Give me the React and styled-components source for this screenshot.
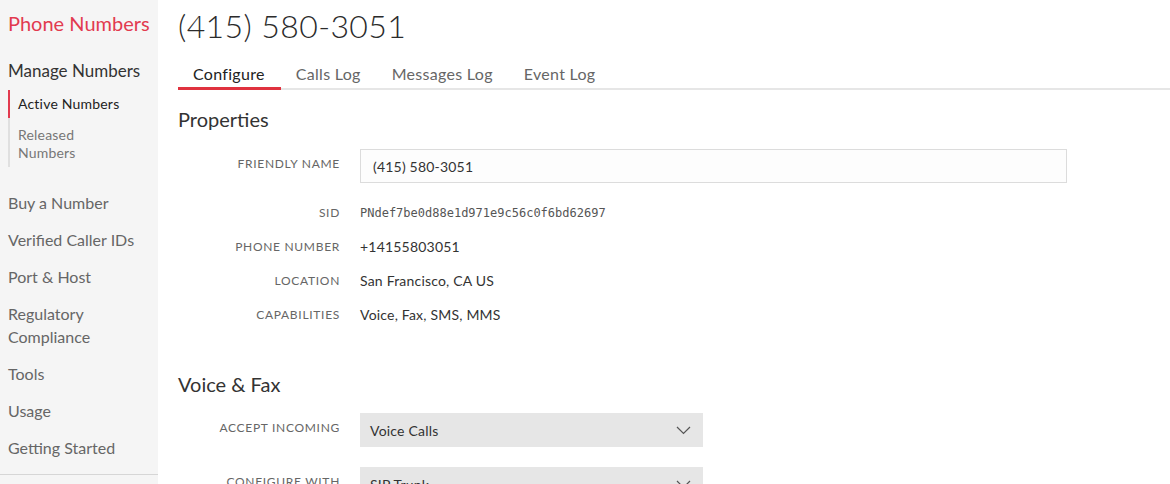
import React from "react";
import styled, { createGlobalStyle } from "styled-components";

const GlobalStyle = createGlobalStyle`
  html, body {
    margin: 0;
    padding: 0;
    background: #fff;
    font-family: Lato, "Open Sans", sans-serif;
    overflow: hidden;
  }
`;

const navItems = [
  "Buy a Number",
  "Verified Caller IDs",
  "Port & Host",
  "Regulatory Compliance",
  "Tools",
  "Usage",
  "Getting Started",
];

const tabs = ["Configure", "Calls Log", "Messages Log", "Event Log"];

const properties = [
  { label: "SID", value: "PNdef7be0d88e1d971e9c56c0f6bd62697", mono: true },
  { label: "Phone Number", value: "+14155803051" },
  { label: "Location", value: "San Francisco, CA US" },
  { label: "Capabilities", value: "Voice, Fax, SMS, MMS" },
];

function Chevron() {
  return (
    <svg width="15" height="9" viewBox="0 0 15 9">
      <path d="M1 1 L7.5 7.5 L14 1" fill="none" stroke="#555" strokeWidth="1.2" />
    </svg>
  );
}

function App() {
  return (
    <>
      <GlobalStyle />
      <StPage>
        <StSidebar>
          <StProduct>Phone Numbers</StProduct>
          <StSection>Manage Numbers</StSection>
          <StSubList>
            <StSubItem active>Active Numbers</StSubItem>
            <StSubItem>Released Numbers</StSubItem>
          </StSubList>
          <StNavList>
            {navItems.map((item) => (
              <StNavItem key={item}>{item}</StNavItem>
            ))}
          </StNavList>
          <StSideRule />
        </StSidebar>

        <StMain>
          <StTitle>(415) 580-3051</StTitle>
          <StTabs>
            {tabs.map((tab, i) => (
              <StTab key={tab} active={i === 0}>
                {tab}
              </StTab>
            ))}
          </StTabs>

          <StHeading>Properties</StHeading>
          <StForm>
            <StLabel input>Friendly Name</StLabel>
            <StInput defaultValue="(415) 580-3051" />
            {properties.map((p) => (
              <React.Fragment key={p.label}>
                <StLabel>{p.label}</StLabel>
                <StValue mono={p.mono}>{p.value}</StValue>
              </React.Fragment>
            ))}
          </StForm>

          <StHeading gap="47px">Voice &amp; Fax</StHeading>
          <StForm wide>
            <StLabel input>Accept Incoming</StLabel>
            <StSelect>
              <span>Voice Calls</span>
              <Chevron />
            </StSelect>
            <StLabel input>Configure With</StLabel>
            <StSelect>
              <span>SIP Trunk</span>
              <Chevron />
            </StSelect>
          </StForm>
        </StMain>
      </StPage>
    </>
  );
}

export default App;

const StPage = styled.div`
  display: flex;
  width: 1170px;
  height: 484px;
  overflow: hidden;
`;

const StSidebar = styled.div`
  width: 158px;
  flex-shrink: 0;
  background: #f5f5f5;
  padding-top: 9px;
  box-sizing: border-box;
  display: flex;
  flex-direction: column;
`;

const StProduct = styled.div`
  padding-left: 8px;
  font-size: 20px;
  line-height: 28px;
  color: #e23a4f;
`;

const StSection = styled.div`
  margin-top: 22px;
  padding-left: 8px;
  font-size: 17px;
  line-height: 24px;
  color: #333;
`;

const StSubList = styled.div`
  margin: 7px 0 0 8px;
  border-left: 2px solid #e0e0e0;
  display: flex;
  flex-direction: column;
  gap: 3px;
`;

const StSubItem = styled.div`
  padding: 5px 32px 5px 8px;
  font-size: 14px;
  line-height: 18px;
  letter-spacing: 0.2px;
  color: ${(p) => (p.active ? "#222" : "#777")};
  ${(p) => p.active && "margin-left: -2px; border-left: 2px solid #e23a4f;"}
`;

const StNavList = styled.div`
  margin-top: 24px;
  padding-left: 8px;
  display: flex;
  flex-direction: column;
  gap: 14px;
`;

const StNavItem = styled.div`
  font-size: 16px;
  line-height: 23px;
  color: #666;
  padding-right: 20px;
`;

const StSideRule = styled.div`
  margin-top: 15px;
  height: 1px;
  background: #d6d6d6;
`;

const StMain = styled.div`
  flex: 1;
  padding-left: 20px;
  padding-top: 6px;
`;

const StTitle = styled.h1`
  margin: 0;
  font-size: 32px;
  line-height: 40px;
  font-weight: 300;
  letter-spacing: 0.4px;
  color: #2b2b2b;
`;

const StTabs = styled.div`
  display: flex;
  border-bottom: 2px solid #e6e6e6;
`;

const StTab = styled.div`
  padding: 18px 16px 3px 15px;
  margin-bottom: -2px;
  font-size: 16px;
  line-height: 20px;
  letter-spacing: 0.3px;
  color: ${(p) => (p.active ? "#222" : "#666")};
  border-bottom: 3px solid ${(p) => (p.active ? "#e0323f" : "transparent")};
`;

const StHeading = styled.h2`
  margin: ${(p) => p.gap || "17px"} 0 0;
  font-size: 20px;
  line-height: 24px;
  font-weight: 400;
  color: #333;
`;

const StForm = styled.div`
  margin-top: ${(p) => (p.wide ? "17px" : "18px")};
  display: grid;
  grid-template-columns: 162px ${(p) => (p.wide ? "343px" : "707px")};
  column-gap: 20px;
  row-gap: ${(p) => (p.wide ? "20px" : "14px")};
  align-items: start;
`;

const StLabel = styled.div`
  text-align: right;
  text-transform: uppercase;
  font-size: 12px;
  letter-spacing: 0.7px;
  line-height: 20px;
  color: #666;
  padding-top: ${(p) => (p.input ? "5px" : "0")};
`;

const StInput = styled.input`
  box-sizing: border-box;
  width: 707px;
  height: 34px;
  margin-bottom: 6px;
  padding: 0 12px;
  border: 1px solid #dcdcdc;
  background: #fdfdfd;
  font-family: Lato, "Open Sans", sans-serif;
  font-size: 14px;
  letter-spacing: 0.2px;
  color: #333;
  outline: none;
`;

const StValue = styled.div`
  font-family: ${(p) => (p.mono ? '"DejaVu Sans Mono", monospace' : 'Lato, "Open Sans", sans-serif')};
  font-size: ${(p) => (p.mono ? "12px" : "14px")};
  letter-spacing: ${(p) => (p.mono ? "0" : "0.2px")};
  line-height: 20px;
  color: ${(p) => (p.mono ? "#555" : "#333")};
`;

const StSelect = styled.div`
  box-sizing: border-box;
  height: 34px;
  padding: 0 12px 0 10px;
  background: #e6e6e6;
  display: flex;
  align-items: center;
  justify-content: space-between;
  font-size: 14px;
  letter-spacing: 0.2px;
  color: #333;
`;
